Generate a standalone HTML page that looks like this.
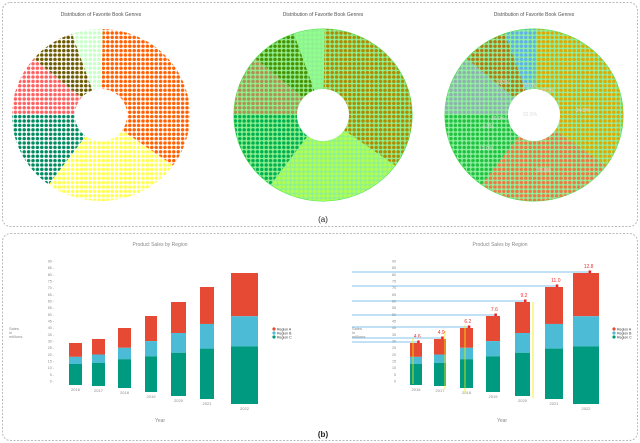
<!DOCTYPE html>
<html><head><meta charset="utf-8"><style>
body{margin:0;background:#fff;width:640px;height:443px;overflow:hidden;font-family:"Liberation Sans",sans-serif}
svg{position:absolute;left:0;top:0}
</style></head><body>
<svg id="s" width="640" height="443" xmlns="http://www.w3.org/2000/svg">
<defs id="d"></defs>
<rect x="2.5" y="2.5" width="635" height="224" rx="8" fill="none" stroke="#bbb" stroke-dasharray="2,1.5"/>
<rect x="2.5" y="233.5" width="635" height="207" rx="8" fill="none" stroke="#bbb" stroke-dasharray="2,1.5"/>
<g font-size="5" fill="#555" text-anchor="middle">
<text x="101" y="16">Distribution of Favorite Book Genres</text>
<text x="323" y="16">Distribution of Favorite Book Genres</text>
<text x="534" y="16">Distribution of Favorite Book Genres</text>
<text x="160" y="246" fill="#888">Product Sales by Region</text>
<text x="500" y="246" fill="#888">Product Sales by Region</text>
<text x="160" y="422" fill="#888">Year</text>
<text x="502" y="422" fill="#888">Year</text>
</g>
<text x="323" y="222" font-size="8" text-anchor="middle" fill="#222">(a)</text>
<text x="323" y="437" font-size="8" text-anchor="middle" fill="#222" font-weight="bold">(b)</text>
<g id="g"></g>
</svg>
<script>
var NS="http://www.w3.org/2000/svg",d=document.getElementById('d'),g=document.getElementById('g'),pc=0;
function el(t,a,p){var e=document.createElementNS(NS,t);for(var k in a)e.setAttribute(k,a[k]);(p||g).appendChild(e);return e;}
function pat(c,bg){var id='p'+(pc++);var p=el('pattern',{id:id,width:4.4,height:4.4,patternUnits:'userSpaceOnUse'},d);
el('rect',{width:4.4,height:4.4,fill:bg},p);el('circle',{cx:2.2,cy:2.2,r:1.75,fill:c},p);return 'url(#'+id+')';}
function pt(cx,cy,rx,ry,a){a=a*Math.PI/180;return [cx+rx*Math.sin(a),cy-ry*Math.cos(a)];}
function wedge(cx,cy,rx,ry,ir,a0,a1,fill){var s='';var n=40;for(var i=0;i<=n;i++){var p=pt(cx,cy,rx,ry,a0+(a1-a0)*i/n);s+=(i?'L':'M')+p[0].toFixed(1)+','+p[1].toFixed(1);}
for(var i=n;i>=0;i--){var p=pt(cx,cy,ir,ir,a0+(a1-a0)*i/n);s+='L'+p[0].toFixed(1)+','+p[1].toFixed(1);}
el('path',{d:s+'Z',fill:fill});}
var segs=[0,125,215,270,310,340,360];
function donut(cx,cols,bg,border){var cy=115,rx=89,ry=86,ir=26;
if(bg)el('ellipse',{cx:cx,cy:cy,rx:rx,ry:ry,fill:bg,stroke:border,'stroke-width':1});
for(var i=0;i<6;i++)wedge(cx,cy,rx,ry,ir,segs[i]+1,segs[i+1]+1,pat(cols[i],bg||'#fff'));
el('circle',{cx:cx,cy:cy,r:ir,fill:'#fff'});}
donut(101,['#ff6000','#ffff50','#008a60','#ff6060','#6a5a00','#c8ffc8'],null);
donut(323,['#b08a00','#b0ff50','#00b050','#b09050','#4a9000','#90ff90'],'#90f090','#40e040');
donut(534,['#e0a800','#f07840','#20c040','#90b0b0','#b07a10','#60b0e8'],'#90f0a0','#40e040');
var lb=[[583,112,'24.5%'],[548,92,'8.0%'],[530,87,'8.0%'],[504,84,'8.0%'],[498,120,'16.0%'],[488,128,'4.0%'],[486,150,'12.0%'],[544,172,'20.0%'],[530,116,'32.5%']];
lb.forEach(function(l){var t=el('text',{x:l[0],y:l[1],'font-size':5,fill:'#ddd','text-anchor':'middle'});t.textContent=l[2];});
var L=[[69,82,343,385],[92,105,339,386],[118,131,328,388],[145,157,316,392],[171,186,302,396],[200,214,287,399],[231,258,273,404]];
var R=[[410,422],[434,446],[460,473],[486,500],[515,530],[545,563],[573,599]];
var yrs=['2016','2017','2018','2019','2020','2021','2022'];
function bars(off,B,lab){for(var i=0;i<7;i++){var b=L[i],x0=B?B[i][0]:b[0],x1=B?B[i][1]:b[1],t=b[2],bt=b[3],h=bt-t;
var r1=t+h*0.33,r2=t+h*(0.33+0.17+i*0.01);
el('rect',{x:x0,y:t,width:x1-x0,height:r1-t,fill:'#e64a35'});
el('rect',{x:x0,y:r1,width:x1-x0,height:r2-r1,fill:'#4bbbd6'});
el('rect',{x:x0,y:r2,width:x1-x0,height:bt-r2,fill:'#009a80'});
var tx=el('text',{x:(x0+x1)/2,y:bt+6,'font-size':4,fill:'#888','text-anchor':'middle'});tx.textContent=yrs[i];
if(lab){var ly=t-1;el('line',{x1:352,y1:ly,x2:x0+(x1-x0)*0.7,y2:ly,stroke:'#9ccff0','stroke-width':1.2});
el('rect',{x:x0+(x1-x0)*0.6,y:ly-1.5,width:2.5,height:2.5,fill:'#e22'});
var v=['4.6','4.9','6.2','7.6','9.2','11.0','12.8'][i];var lt=el('text',{x:x0+(x1-x0)*0.6,y:ly-4,'font-size':5,fill:'#e33','text-anchor':'middle'});lt.textContent=v;}}
for(var k=0;k<=18;k++){var y=381-k*(120/18);var tt=el('text',{x:off,y:y+1.5,'font-size':3.6,fill:'#888','text-anchor':'end'});tt.textContent=(k*5)+(lab?'':' -');}
var lx=B?614:274;[['#e64a35','Region A'],['#4bbbd6','Region B'],['#009a80','Region C']].forEach(function(c,j){el('circle',{cx:lx,cy:329+j*4,r:1.6,fill:c[0]});var q=el('text',{x:lx+3,y:330.5+j*4,'font-size':3.5,fill:'#333'});q.textContent=c[1];});
var s1=el('text',{x:B?352:9,y:330,'font-size':4,fill:'#888'});s1.textContent='Sales';var s2=el('text',{x:B?352:9,y:334,'font-size':4,fill:'#888'});s2.textContent='in';var s3=el('text',{x:B?352:9,y:338,'font-size':4,fill:'#888'});s3.textContent='millions';}
bars(54,null,false);
bars(396,R,true);
[[413,338,384],[445,331,389],[465,325,393],[533,302,398]].forEach(function(a){el('line',{x1:a[0],y1:a[1],x2:a[0],y2:a[2],stroke:'#ee0','stroke-width':0.8});});
</script>
</body></html>
